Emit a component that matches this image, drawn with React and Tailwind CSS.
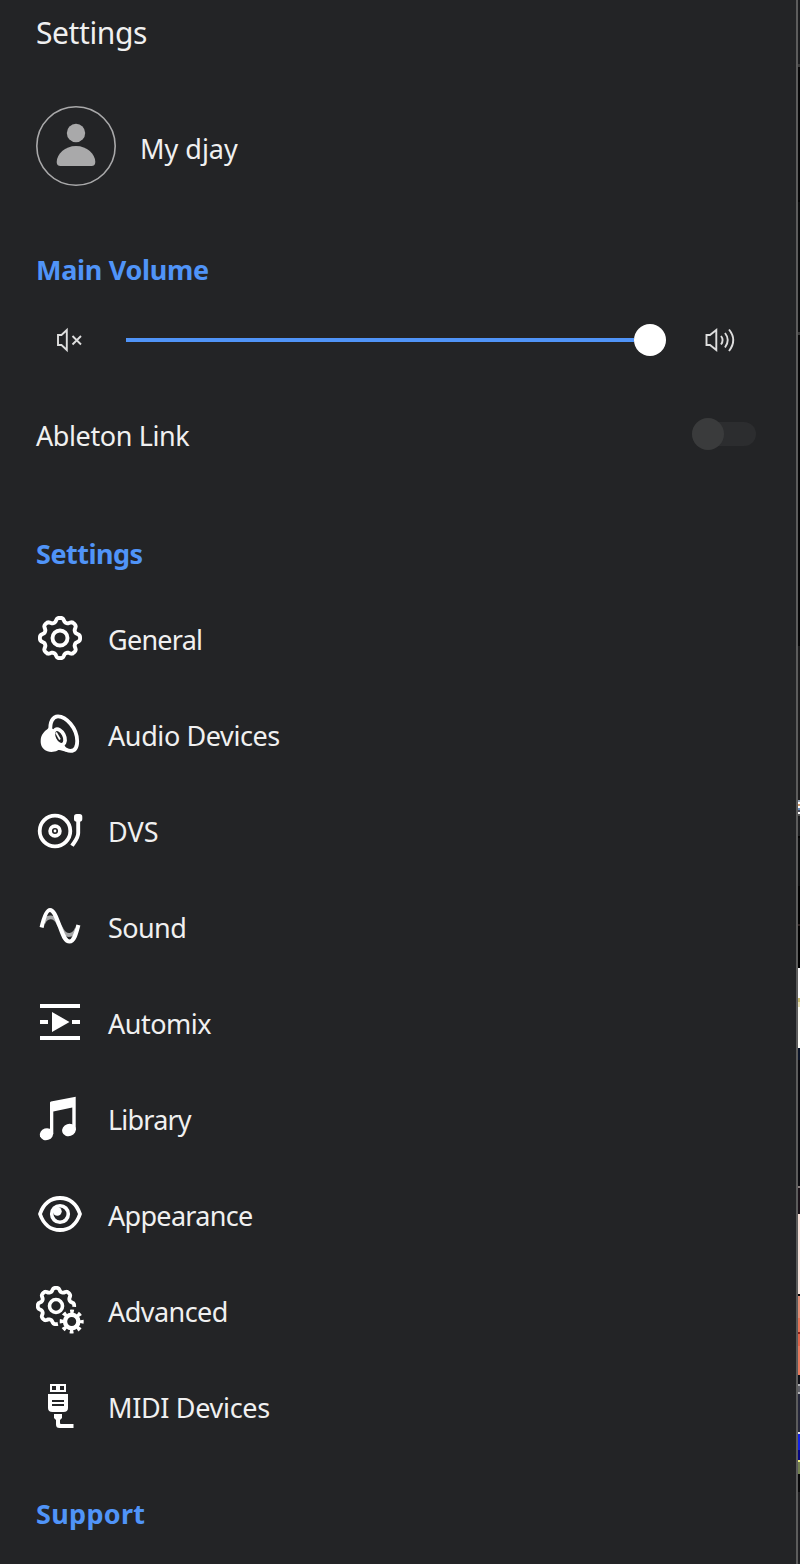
import React from "react";

const gearPath = (cx, cy, base, amp, from = 0, to = 360) => {
  const points = [];
  for (let a = from; a <= to; a += 3) {
    const t = (a * Math.PI) / 180;
    const wave = Math.tanh(1.6 * (Math.cos(8 * t) + 0.15));
    const r = base + amp * wave;
    points.push(`${(cx + r * Math.cos(t)).toFixed(2)} ${(cy + r * Math.sin(t)).toFixed(2)}`);
  }
  return "M" + points.join("L");
};

const Icon = ({ children }) => (
  <svg viewBox="0 0 48 48" className="h-12 w-12 shrink-0" fill="none" stroke="none">
    {children}
  </svg>
);

const GeneralIcon = () => (
  <Icon>
    <path d={gearPath(24, 24, 18.1, 2.1) + "Z"} stroke="#fff" strokeWidth="3.9" strokeLinejoin="round" />
    <circle cx="24" cy="24" r="7.5" stroke="#fff" strokeWidth="3.9" />
  </Icon>
);

const AudioIcon = () => (
  <Icon>
    <path d="M14.500 21C13.500 12 17 6.300 22 6.300C30 6.300 41 18 41.200 31C41.200 37 39 40.900 34.500 40.900C32 40.900 29 39.500 26 37" stroke="#fff" strokeWidth="3.800" />
    <path d="M13 17.500L17 19L29 36L31.500 41.500C27 42 24 39 21.500 40.500C18 42.300 14 42.300 11.500 41.200C6.500 39.500 4.300 35.500 4.700 30C5 25 8 21.500 11 19.500Z" fill="#fff" />
    <ellipse cx="23.200" cy="27" rx="5.100" ry="8.300" transform="rotate(-27 23.200 27)" fill="#232426" stroke="#fff" strokeWidth="3.700" />
    <path d="M20 22.500L24 29.500" stroke="#fff" strokeWidth="1.800" />
  </Icon>
);

const DvsIcon = () => (
  <Icon>
    <circle cx="19" cy="25" r="15.3" stroke="#fff" strokeWidth="3.8" />
    <circle cx="19" cy="25" r="4.900" stroke="#fff" strokeWidth="3.700" />
    <circle cx="19" cy="25" r="1.4" fill="#fff" />
    <rect x="38" y="8" width="8.3" height="7.8" rx="2.8" fill="#fff" />
    <path d="M42.200 14V27C42.200 32 39 35 36 39.800" stroke="#fff" strokeWidth="3.900" />
  </Icon>
);

const SoundIcon = () => (
  <Icon>
    <path d="M7.500 21C10 14.500 18 12.500 22 21L26 28C30 35.500 38 34 40.500 27" stroke="#a4a5a6" strokeWidth="3.800" />
    <path d="M5.600 25.500C8 15 10.500 8 14 8C18.500 8 21 18 24 25C27 33 29 39.500 33.500 39.500C38 39.500 40 32 42.400 23" stroke="#fff" strokeWidth="4.100" />
  </Icon>
);

const AutomixIcon = () => (
  <Icon>
    <path d="M4 6H44V10H4ZM4 38H44V42H4ZM4 22H12V26H4ZM36 22H44V26H36ZM16 14L33.500 24L16 34Z" fill="#fff" />
  </Icon>
);

const LibraryIcon = () => (
  <Icon>
    <path d="M14 8.500Q14 7.600 15 7.400L39.700 2.800V36H36.300V13.500L17.300 17.500V40H14Z" fill="#fff" />
    <ellipse cx="10.500" cy="40.200" rx="6.800" ry="5.900" transform="rotate(-18 10.500 40.200)" fill="#fff" />
    <ellipse cx="33" cy="36" rx="7" ry="6.100" transform="rotate(-18 33 36)" fill="#fff" />
  </Icon>
);

const AppearanceIcon = () => (
  <Icon>
    <path d="M4 24C7.500 13.500 15 8 24 8S40.500 13.500 44 24C40.500 34.500 33 40 24 40S7.500 34.500 4 24Z" stroke="#fff" strokeWidth="3.800" strokeLinejoin="round" />
    <circle cx="24" cy="24" r="8.300" stroke="#fff" strokeWidth="3.600" />
    <circle cx="21.300" cy="21.300" r="4.400" fill="#fff" />
  </Icon>
);

const AdvancedIcon = () => (
  <Icon>
    <path d={gearPath(20, 20, 16.4, 1.9, 84, 363)} stroke="#fff" strokeWidth="3.800" strokeLinejoin="round" />
    <circle cx="20" cy="20" r="6.500" stroke="#fff" strokeWidth="3.600" />
    <circle cx="35.700" cy="35.500" r="6.700" stroke="#fff" strokeWidth="4.400" />
    <circle cx="35.700" cy="35.500" r="9.800" stroke="#fff" strokeWidth="4.400" strokeDasharray="3.600 4.097" strokeDashoffset="1.800" />
  </Icon>
);

const MidiIcon = () => (
  <Icon>
    <path fillRule="evenodd" d="M14 2H30V10H14ZM16 4V8H20V4ZM24 4V8H28V4Z" fill="#fff" />
    <path fillRule="evenodd" d="M12 12H32V26Q32 30 27.500 30H16.500Q12 30 12 26ZM16 18V20H28V18ZM16 22V24H28V22Z" fill="#fff" />
    <path d="M18 32H26V36L24 38V41Q24 42 25 42H37.500V46H23.500Q20 46 20 42.500V38L18 36Z" fill="#fff" />
  </Icon>
);

const items = [
  { label: "General", icon: GeneralIcon, tracking: "tracking-[-0.75px]" },
  { label: "Audio Devices", icon: AudioIcon, tracking: "tracking-[-0.4px]" },
  { label: "DVS", icon: DvsIcon, tracking: "tracking-[0.1px]" },
  { label: "Sound", icon: SoundIcon, tracking: "tracking-[-0.6px]" },
  { label: "Automix", icon: AutomixIcon, tracking: "tracking-[-0.5px]" },
  { label: "Library", icon: LibraryIcon, tracking: "tracking-[-0.8px]" },
  { label: "Appearance", icon: AppearanceIcon, tracking: "tracking-[-0.7px]" },
  { label: "Advanced", icon: AdvancedIcon, tracking: "tracking-[-0.55px]" },
  { label: "MIDI Devices", icon: MidiIcon, tracking: "tracking-[-0.33px]" },
];

const edge = [
  [64, "#1b1c1e"], [3, "#3c3c3c"], [133, "#070708"], [2, "#000000"], [130, "#0b0c0d"], [3, "#3c3c3c"],
  [311, "#060607"], [154, "#1b1b1c"], [2, "#9aa7bb"], [2, "#ffffff"], [2, "#d49a68"], [2, "#ffffff"],
  [2, "#6d8fc0"], [2, "#4a4b58"], [2, "#ffffff"], [2, "#555555"], [20, "#1b1c1e"], [2, "#000000"],
  [48, "#0b0c0d"], [38, "#000000"], [2, "#2b2020"], [42, "#000000"], [30, "#ffffff"], [4, "#cfc27a"],
  [5, "#ebe3bb"], [41, "#fffffa"], [12, "#0b1428"], [126, "#0b0b0f"], [2, "#8a8080"], [26, "#1a1218"],
  [80, "#f9e2da"], [2, "#100808"], [22, "#e69078"], [14, "#e87558"], [2, "#8c2019"], [12, "#e0644a"],
  [29, "#e87a5e"], [9, "#101018"], [2, "#b0b0b5"], [6, "#606068"], [2, "#b0b0b5"], [38, "#25263a"],
  [2, "#e0e0ee"], [16, "#1020e8"], [10, "#050580"], [2, "#f2f280"], [12, "#718050"], [18, "#08080a"],
  [70, "#1f1f22"],
];

const AvatarIcon = () => (
  <svg viewBox="0 0 80 80" className="h-20 w-20 shrink-0">
    <circle cx="40" cy="40" r="39.200" fill="none" stroke="#a9a9aa" strokeWidth="1.600" />
    <circle cx="40" cy="27" r="9.200" fill="#a9a9aa" />
    <path d="M20.700 56C20.700 48 29 40 40 40S59.300 48 59.300 56Q59.300 60 55.500 60H24.500Q20.700 60 20.700 56Z" fill="#a9a9aa" />
  </svg>
);

const Heading = ({ children, className }) => (
  <h2 className={`h-10 shrink-0 font-bold text-[#5094f8] text-[27px] leading-10 whitespace-nowrap ${className}`}>{children}</h2>
);

export default function App() {
  return (
    <div className="flex h-[1564px] w-[800px] overflow-hidden bg-[#232426] font-['Noto_Sans',sans-serif] text-[27px] text-[#f0f0f0]">
      <main className="flex w-[796px] shrink-0 flex-col pl-9">
        <h1 className="mt-[13px] h-10 text-[30px] leading-10 tracking-[-0.4px]">Settings</h1>
        <section className="mt-[53px] flex h-20 items-center gap-6">
          <AvatarIcon />
          <span className="mt-[5px] leading-10 tracking-[0px]">My djay</span>
        </section>
        <Heading className="mt-16 tracking-[-0.3px]">Main Volume</Heading>
        <div className="mt-[34px] flex h-8 items-center">
          <svg viewBox="0 0 32 32" className="ml-[18px] h-8 w-8 shrink-0" fill="none" stroke="#dedede" strokeWidth="1.900">
            <path d="M4 11H7.500L12.800 6V26L7.500 21H4Z" />
            <path d="M18.500 12L27 20.500M27 12L18.500 20.500" />
          </svg>
          <div className="ml-10 h-1 w-[508px] bg-[#5094f8]" />
          <div className="h-8 w-8 rounded-full bg-white" />
          <svg viewBox="0 0 36 32" className="ml-[37px] h-8 w-9 shrink-0" fill="none" stroke="#dedede" strokeWidth="1.900">
            <path d="M3.500 11H7L13.300 6V26L7 21H3.500Z" />
            <path d="M18 12Q21.200 16 18 20.500M22 9Q27.500 16 22 23.500M26 5.500Q34.500 16 26 27" />
          </svg>
        </div>
        <div className="mt-[58px] flex h-10 items-center justify-between pr-10">
          <span className="mt-1 leading-10 tracking-[-0.4px]">Ableton Link</span>
          <div className="flex h-8 w-16 items-center">
            <div className="h-6 w-16 rounded-full bg-[#2c2d2f]">
              <div className="-mt-1 h-8 w-8 rounded-full bg-[#3a3b3c]" />
            </div>
          </div>
        </div>
        <Heading className="mt-20 tracking-[-0.5px]">Settings</Heading>
        <ul className="mt-4">
          {items.map(({ label, icon: ItemIcon, tracking }) => (
            <li key={label} className="flex h-24 items-center gap-6">
              <ItemIcon />
              <span className={`mt-[3px] leading-10 whitespace-nowrap ${tracking}`}>{label}</span>
            </li>
          ))}
        </ul>
        <Heading className="mt-10 tracking-[0.3px]">Support</Heading>
      </main>
      <div className="w-0.5 shrink-0 bg-[#5c5c5c]" />
      <div className="flex w-0.5 shrink-0 flex-col">
        {edge.map(([height, background], i) => (
          <div key={i} className="w-0.5 shrink-0" style={{ height, background }} />
        ))}
      </div>
    </div>
  );
}
